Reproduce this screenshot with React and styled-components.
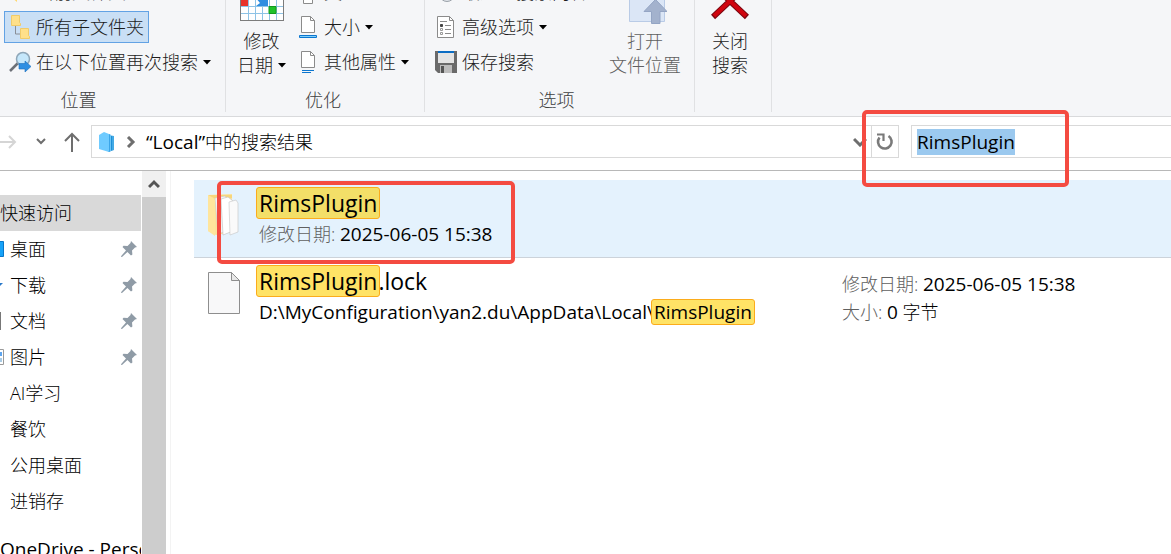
import React from 'react';
import styled, { createGlobalStyle, css } from 'styled-components';

const Global = createGlobalStyle`
  * { box-sizing: border-box; }
  html, body { margin: 0; height: 100%; }
  body {
    background: #fff;
    color: #000;
    font: 18px/24px "Open Sans", "Noto Sans CJK SC", sans-serif;
    font-weight: 300;
    overflow: hidden;
  }
  #root { height: 100%; }
  button, input { font: inherit; color: inherit; }
`;

const Window = styled.div`
  display: flex;
  flex-direction: column;
  height: 100vh;
  overflow: hidden;
`;

const Ribbon = styled.header`
  display: flex;
  flex: none;
  height: 117px;
  padding-bottom: 4px;
  background: #f5f6f8;
  border-bottom: 1px solid #d9dadc;
  color: #1c1c1c;
  overflow: hidden;
`;

const Group = styled.section`
  display: flex;
  flex-direction: column;
  justify-content: flex-end;
  flex: none;
  width: ${(p) => p.$width}px;
  border-right: 1px solid #e0e1e3;
`;

const GroupBody = styled.div`
  display: flex;
  align-items: flex-end;
  flex: none;
  gap: ${(p) => p.$gap || 0}px;
  padding: 0 ${(p) => p.$pad || 0}px;
`;

const GroupName = styled.h2`
  flex: none;
  margin: 8px 0 0;
  height: 26px;
  padding-right: ${(p) => p.$shift || 0}px;
  color: #404040;
  font-size: 18px;
  font-weight: 300;
  line-height: 28px;
  text-align: center;
`;

const Stack = styled.div`
  display: flex;
  flex-direction: column;
  align-items: flex-start;
  gap: 3px;
`;

const Command = styled.button`
  display: flex;
  align-items: center;
  gap: 5px;
  height: 32px;
  padding: 0 4px;
  border: 1px solid transparent;
  background: none;
  white-space: nowrap;
  ${(p) => p.$active && css`
    border-color: #62a2e4;
    background: #c9dff5;
  `}
`;

const BigCommand = styled.button`
  display: flex;
  flex-direction: column;
  align-items: center;
  gap: 5px;
  padding: 0 0 1px;
  border: 0;
  background: none;
  white-space: nowrap;
  &:disabled { color: #606060; }
`;

const Label = styled.span`
  display: flex;
  align-items: center;
  gap: 5px;
`;

const CaretShape = styled.svg`
  flex: none;
`;

const Caret = () => (
  <CaretShape width="8" height="5" viewBox="0 0 8 5"><path d="M0 0h8L4 4.500z" fill="#000" /></CaretShape>
);

const AddressBar = styled.nav`
  display: flex;
  align-items: center;
  flex: none;
  height: 54px;
  padding-bottom: 4px;
  border-bottom: 1px solid #b8b8b8;
`;

const NavButtons = styled.div`
  display: flex;
  align-items: center;
  justify-content: space-between;
  flex: none;
  width: 91px;
  padding-right: 11px;
`;

const IconButton = styled.button`
  display: flex;
  align-items: center;
  justify-content: center;
  padding: 0;
  border: 0;
  background: none;
`;

const PathBox = styled.div`
  display: flex;
  align-items: center;
  gap: 10px;
  flex: 1;
  min-width: 0;
  height: 33px;
  padding: 0 4px 0 6px;
  border: 1px solid #d9d9d9;
`;

const PathText = styled.span`
  flex: 1;
  white-space: nowrap;
`;

const RefreshButton = styled(IconButton)`
  flex: none;
  width: 27px;
  height: 33px;
  margin-right: 12px;
  border: 1px solid #d9d9d9;
  border-left: 0;
`;

const SearchBox = styled.input`
  flex: none;
  width: 22.2%;
  height: 33px;
  padding: 0 5px;
  border: 1px solid #d9d9d9;
  border-right: 0;
  border-radius: 0;
  outline: 0;
  font-size: 19px;
  font-weight: 400;
  &::selection { background: #9bc9ef; color: #000; }
`;

const Main = styled.div`
  display: flex;
  flex: 1;
  min-height: 0;
`;

const Sidebar = styled.aside`
  flex: none;
  width: 142px;
  border-right: 1px solid #fff;
  padding-top: 24px;
  overflow: hidden;
`;

const Place = styled.a`
  display: flex;
  align-items: center;
  height: 36px;
  padding-right: 4px;
  color: #000;
  text-decoration: none;
  white-space: nowrap;
  background: ${(p) => (p.$current ? '#d9d9d9' : 'none')};
  margin-top: ${(p) => (p.$apart ? 12 : 0)}px;
`;

const PlaceIcon = styled.span`
  display: flex;
  align-items: center;
  flex: none;
  width: 10px;
`;

const PlaceName = styled.span`
  flex: 1;
`;

const ScrollTrack = styled.div`
  flex: none;
  width: 29px;
  border-right: 1px solid #f3f3f3;
  padding-right: 4px;
`;

const ScrollUp = styled(IconButton)`
  width: 24px;
  height: 26px;
  background: #f0f0f0;
`;

const ScrollThumb = styled.div`
  width: 24px;
  height: 100%;
  background: #cdcdcd;
`;

const Results = styled.ul`
  flex: 1;
  min-width: 0;
  margin: 0;
  padding: 9px 0 0 23px;
  list-style: none;
`;

const Result = styled.li`
  display: flex;
  height: 78px;
  padding: 7px 0 0 14px;
  background: ${(p) => (p.$selected ? '#e4f2fd' : 'none')};
  border-bottom: 1px solid ${(p) => (p.$selected ? '#ccd3da' : 'transparent')};
`;

const ResultIcon = styled.div`
  flex: none;
  width: 51px;
  padding-top: 6px;
`;

const ResultText = styled.div`
  flex: 583 1 0;
  min-width: 0;
  white-space: nowrap;
`;

const ResultMeta = styled.div`
  flex: 329 1 0;
  min-width: 0;
  padding-top: 5px;
  white-space: nowrap;
  line-height: 28px;
`;

const FileName = styled.div`
  height: 34px;
  font-size: 23px;
  font-weight: 400;
  line-height: 32px;
`;

const Detail = styled.div`
  height: 28px;
  line-height: 26px;
`;

const Latin = styled.span`
  font-size: 19px;
  font-weight: 400;
`;

const Muted = styled.span`
  color: #606060;
`;

const Match = styled.mark`
  display: inline-block;
  margin: 0 -2px 0 -3px;
  padding: 0 2px;
  border: 1px solid #fbac1c;
  border-radius: 3px;
  background: ${(p) => (p.$selected ? '#f3df68' : '#ffe366')};
  color: inherit;
  line-height: ${(p) => (p.$small ? 24 : 30)}px;
`;

const Outline = styled.div`
  position: absolute;
  left: ${(p) => p.$x}px;
  top: ${(p) => p.$y}px;
  width: ${(p) => p.$w}px;
  height: ${(p) => p.$h}px;
  border: 4px solid #f44b41;
  border-radius: 5px;
  pointer-events: none;
`;

const SubfoldersIcon = () => (
  <svg width="22" height="26" viewBox="0 0 22 26">
    <path d="M6.500 12v8H11" fill="none" stroke="#8a8f96" />
    <path d="M2.500 1.500h8v7l1 1v2h-9z" fill="#ffe08a" stroke="#f0cb6a" />
    <path d="M11.500 14.500h8v7l1 1v2h-9z" fill="#ffe08a" stroke="#f0cb6a" />
  </svg>
);

const FolderTip = () => (
  <svg width="22" height="24" viewBox="0 0 22 24"><path d="M2 2h6v20l-6-5z" fill="#ffd970" /></svg>
);

const SearchAgainIcon = () => (
  <svg width="22" height="22" viewBox="0 0 22 22">
    <path d="M1 20l8-8" stroke="#6c7077" strokeWidth="2.500" />
    <circle cx="14" cy="8" r="6.500" fill="#c5e7fb" stroke="#8ea6b8" strokeWidth="1.500" />
    <path d="M10 12.500h6V10l6 5.500-6 5.500v-3h-6z" fill="#2f8fe2" stroke="#1d71bd" strokeWidth=".6" />
  </svg>
);

const CalendarIcon = () => (
  <svg width="44" height="47" viewBox="0 0 44 47">
    <rect x=".5" y=".5" width="43" height="43" fill="#fff" stroke="#7c7c7c" />
    <path d="M8.500 1v42M15.500 1v42M22.500 1v42M29.500 1v42M36.500 1v42M1 8.500h42M1 15.500h42M1 22.500h42M1 29.500h42M1 36.500h42" stroke="#8ec3e6" />
    <path d="M1 16h7v13H1z" fill="#e8322a" />
    <path d="M15 20h13v9H16l4-3z" fill="#2e8de0" />
    <path d="M29 29.500h7v7h-7z" fill="#20c32a" stroke="#149a1e" />
  </svg>
);

const DocIcon = ({ kind }) => (
  <svg width="22" height="24" viewBox="0 0 22 24">
    {kind === 'list' ? (
      <>
        <path d="M2.500 1.500h12l4 4v17h-16z" fill="#fff" stroke="#8b8b8b" />
        <path d="M14.500 1.500v4h4M5 6.500h7M10 10.500h6M10 14.500h6M10 18.500h6" fill="none" stroke="#8b8b8b" />
        <path d="M5.500 9.500h2v2h-2z" fill="#444" stroke="#444" />
        <path d="M5.500 13.500h2v2h-2zM5.500 17.500h2v2h-2z" fill="none" stroke="#999" />
      </>
    ) : (
      <>
        <path d="M4.500 1.500h9l4 4v12h-13z" fill="#fff" stroke="#8b8b8b" />
        <path d="M13.500 1.500v4h4" fill="none" stroke="#8b8b8b" />
        {kind === 'size' && <path d="M2.500 20.500h17v2h-17z" fill="#7fd0fb" stroke="#0c76cf" />}
        {kind === 'props' && <path d="M5 20.500h12M5 22.500h9" stroke="#0c76cf" />}
        {kind === 'type' && <path d="M6.500 14v9.500h9v-9.500" fill="#fff" stroke="#8b8b8b" />}
      </>
    )}
  </svg>
);

const SaveIcon = () => (
  <svg width="22" height="22" viewBox="0 0 22 22">
    <path d="M0 0h22v22H3l-3-3z" fill="#6a6a6a" />
    <path d="M3 0h16v2H3z" fill="#0b6dc4" />
    <path d="M3 2h16v10H3z" fill="#e4e4e4" />
    <path d="M5 14h12v8H5z" fill="#bdbdbd" />
    <path d="M6 15h3v7H6z" fill="#555" />
  </svg>
);

const RecentIcon = () => (
  <svg width="22" height="24" viewBox="0 0 22 24"><circle cx="12" cy="14" r="7.500" fill="#e0e5ea" stroke="#9aa1a8" /></svg>
);

const OpenLocationIcon = () => (
  <svg width="44" height="40" viewBox="0 0 44 40">
    <path d="M6.500 .5h35v37h-35z" fill="#dbe6f6" stroke="#b9cbe6" />
    <path d="M32.500 15.500L44 27.500h-7V39.500h-8.500V27.500H21z" fill="#a3b2cd" stroke="#94a5c4" />
  </svg>
);

const CloseIcon = () => (
  <svg width="38" height="43" viewBox="0 0 38 43">
    <path d="M2 4l34 32M36 4L2 36" stroke="#7a0710" strokeWidth="6" />
    <path d="M3 5l32 30M35 5L3 35" stroke="#d0050f" strokeWidth="4" />
  </svg>
);

const LibraryIcon = () => (
  <svg width="18" height="20" viewBox="0 0 18 20">
    <path d="M9 3l7 1v14l-6 2z" fill="#1e8fd6" />
    <path d="M1 3l5-3 5 2v18L1 17z" fill="#6fcbff" />
    <path d="M11 2l1.500.4v16.800L11 20z" fill="#3aa5e8" />
    <path d="M12.500 3v16M15 4v14" stroke="#7cd0fb" strokeWidth=".8" />
  </svg>
);

const Stroke = ({ w, h, d, color, width = 2 }) => (
  <svg width={w} height={h} viewBox={`0 0 ${w} ${h}`}><path d={d} fill="none" stroke={color} strokeWidth={width} /></svg>
);

const RefreshIcon = () => (
  <svg width="18" height="18" viewBox="0 0 18 18">
    <path d="M3.500 4.500A6.800 6.800 0 1 0 12.500 3" fill="none" stroke="#7a7a7a" strokeWidth="2.600" />
    <path d="M1 1.500h6.500V8" fill="none" stroke="#7a7a7a" strokeWidth="2.200" />
  </svg>
);

const PinIcon = () => (
  <svg width="16" height="16" viewBox="0 0 16 16">
    <path d="M10 0l6 6-2 .6-3 3 .4 4-1.400 1-3.600-3.600L1 16l-1-.2L.2 15 5 9.600 1.500 6l1-1.300 4 .3 3-3z" fill="#8f9ba6" />
  </svg>
);

const FolderIcon = () => (
  <svg width="34" height="44" viewBox="0 0 34 44">
    <path d="M0 2l24-1v38L8 42 0 38z" fill="#fbe29b" />
    <path d="M0 2h24v3H6z" fill="#f7d67b" />
    <path d="M7 5l10-2 2 3v32l-9 3z" fill="#f4f4f4" stroke="#c8c8c8" strokeWidth=".6" />
    <path d="M13 6l7-2 5 4v30l-10 4z" fill="#fff" stroke="#bdbdbd" strokeWidth=".6" />
    <path d="M21 9l7-2 2 3v29l-8 3z" fill="#fafafa" stroke="#c4c4c4" strokeWidth=".6" />
    <path d="M0 2l7 5v36l-7-5z" fill="#ffe59c" />
  </svg>
);

const FileIcon = () => (
  <svg width="34" height="44" viewBox="0 0 34 44">
    <path d="M.5 1.500h23l8 8v33H.5z" fill="#f8f8f9" stroke="#8e8e8e" />
    <path d="M23.500 1.500v8h8z" fill="#e8e8e8" stroke="#8e8e8e" />
  </svg>
);

const placeIcons = {
  desktop: <svg width="4" height="16" viewBox="0 0 4 16"><path d="M0 .5h3.500v15H0" fill="#16a2f8" stroke="#0877c9" /></svg>,
  download: <svg width="4" height="6" viewBox="0 0 4 6"><path d="M0 1h3L0 4z" fill="#2a79c9" /></svg>,
  docs: <svg width="2" height="18" viewBox="0 0 2 18"><path d="M0 0h1v18H0z" fill="#777" /></svg>,
  pictures: <svg width="4" height="16" viewBox="0 0 4 16"><path d="M0 .5h3.500v15H0" fill="#fff" stroke="#9a9a9a" /><path d="M0 3h2v4H0z" fill="#5ea5ee" /><path d="M0 9h2v4H0z" fill="#a9cbe4" /></svg>,
};

const places = [
  ['桌面', 'desktop', true],
  ['下载', 'download', true],
  ['文档', 'docs', true],
  ['图片', 'pictures', true],
  ['AI学习'],
  ['餐饮'],
  ['公用桌面'],
  ['进销存'],
];

const SEARCH = 'RimsPlugin';

export default function App() {
  const search = React.useRef(null);
  React.useEffect(() => {
    search.current.focus();
    search.current.select();
  }, []);

  return (
    <Window>
      <Global />
      <Ribbon>
        <Group $width={226}>
          <GroupBody $pad={4}>
            <Stack>
              <Command><FolderTip />当前文件夹</Command>
              <Command $active><SubfoldersIcon />所有子文件夹</Command>
              <Command><SearchAgainIcon />在以下位置再次搜索<Caret /></Command>
            </Stack>
          </GroupBody>
          <GroupName $shift={68}>位置</GroupName>
        </Group>
        <Group $width={199}>
          <GroupBody $pad={11} $gap={6}>
            <BigCommand>
              <CalendarIcon />
              <span>修改<br /><Label>日期<Caret /></Label></span>
            </BigCommand>
            <Stack>
              <Command><DocIcon kind="type" />类型<Caret /></Command>
              <Command><DocIcon kind="size" />大小<Caret /></Command>
              <Command><DocIcon kind="props" />其他属性<Caret /></Command>
            </Stack>
          </GroupBody>
          <GroupName $shift={4}>优化</GroupName>
        </Group>
        <Group $width={270}>
          <GroupBody $pad={5} $gap={16}>
            <Stack>
              <Command><RecentIcon />最近的搜索内容</Command>
              <Command><DocIcon kind="list" />高级选项<Caret /></Command>
              <Command><SaveIcon />保存搜索</Command>
            </Stack>
            <BigCommand disabled>
              <OpenLocationIcon />
              <span>打开<br />文件位置</span>
            </BigCommand>
          </GroupBody>
          <GroupName $shift={6}>选项</GroupName>
        </Group>
        <Group $width={77}>
          <GroupBody $pad={16}>
            <BigCommand>
              <CloseIcon />
              <span>关闭<br />搜索</span>
            </BigCommand>
          </GroupBody>
          <GroupName />
        </Group>
      </Ribbon>

      <AddressBar>
        <NavButtons>
          <IconButton aria-label="前进"><Stroke w={17} h={16} d="M0 8h15M9 2l6 6-6 6" color="#d5d5d5" /></IconButton>
          <IconButton aria-label="最近"><Stroke w={10} h={8} d="M1 1l4 4 4-4" color="#6e6e6e" /></IconButton>
          <IconButton aria-label="向上"><Stroke w={16} h={20} d="M8 20V2M1 9l7-7 7 7" color="#6e6e6e" /></IconButton>
        </NavButtons>
        <PathBox>
          <LibraryIcon />
          <Stroke w={10} h={12} d="M2 1l5 5-5 5" color="#6e6e6e" width={3} />
          <PathText><Latin>“Local”</Latin>中的搜索结果</PathText>
          <Stroke w={14} h={10} d="M1 2l6 6 6-6" color="#6e6e6e" width={3} />
        </PathBox>
        <RefreshButton aria-label="刷新"><RefreshIcon /></RefreshButton>
        <SearchBox ref={search} aria-label="搜索" defaultValue={SEARCH} />
      </AddressBar>

      <Main>
        <Sidebar>
          <Place href="#quick" $current>快速访问</Place>
          {places.map(([name, icon, pinned]) => (
            <Place href="#place" key={name}>
              <PlaceIcon>{placeIcons[icon]}</PlaceIcon>
              <PlaceName>{name}</PlaceName>
              {pinned && <PinIcon />}
            </Place>
          ))}
          <Place href="#onedrive" $apart><Latin>OneDrive - Personal</Latin></Place>
        </Sidebar>
        <ScrollTrack>
          <ScrollUp aria-label="向上滚动"><Stroke w={12} h={10} d="M1 8l5-5 5 5" color="#555" width={3} /></ScrollUp>
          <ScrollThumb />
        </ScrollTrack>
        <Results>
          <Result $selected>
            <ResultIcon><FolderIcon /></ResultIcon>
            <ResultText>
              <FileName><Match $selected>{SEARCH}</Match></FileName>
              <Detail><Muted>修改日期: </Muted><Latin>2025-06-05 15:38</Latin></Detail>
            </ResultText>
          </Result>
          <Result>
            <ResultIcon><FileIcon /></ResultIcon>
            <ResultText>
              <FileName><Match>{SEARCH}</Match>.lock</FileName>
              <Detail><Latin>D:\MyConfiguration\yan2.du\AppData\Local\<Match $small>{SEARCH}</Match></Latin></Detail>
            </ResultText>
            <ResultMeta>
              <div><Muted>修改日期: </Muted><Latin>2025-06-05 15:38</Latin></div>
              <div><Muted>大小: </Muted><Latin>0</Latin> 字节</div>
            </ResultMeta>
          </Result>
        </Results>
      </Main>
      <Outline $x={217} $y={181} $w={298} $h={83} />
      <Outline $x={862} $y={110} $w={207} $h={77} />
    </Window>
  );
}
